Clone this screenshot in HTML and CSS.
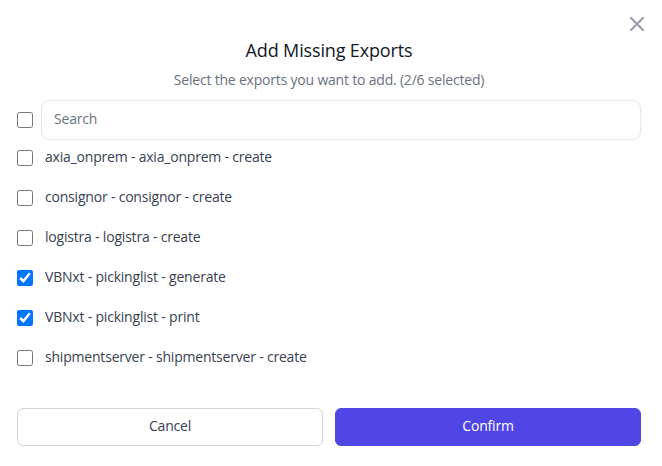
FILE: index.html
```html
<!DOCTYPE html>
<html>
<head>
<meta charset="utf-8">
<link rel="stylesheet" href="styles.css">
</head>
<body>
<div class="dialog">
  <button class="close" aria-label="Close">
    <svg width="16" height="16" viewBox="0 0 16 16"><path d="M2 2L14 14M14 2L2 14" stroke="#9ca3af" stroke-width="2.4" stroke-linecap="round"/></svg>
  </button>
  <h2 class="title">Add Missing Exports</h2>
  <p class="subtitle">Select the exports you want to add. (2/6 selected)</p>
  <div class="search-row">
    <input type="checkbox" class="cb">
    <input type="text" class="search" placeholder="Search">
  </div>
  <ul class="list">
    <li class="item"><input type="checkbox" class="cb"><span>axia_onprem - axia_onprem - create</span></li>
    <li class="item"><input type="checkbox" class="cb"><span>consignor - consignor - create</span></li>
    <li class="item"><input type="checkbox" class="cb"><span>logistra - logistra - create</span></li>
    <li class="item"><input type="checkbox" class="cb" checked><span>VBNxt - pickinglist - generate</span></li>
    <li class="item"><input type="checkbox" class="cb" checked><span>VBNxt - pickinglist - print</span></li>
    <li class="item"><input type="checkbox" class="cb"><span>shipmentserver - shipmentserver - create</span></li>
  </ul>
  <div class="actions">
    <button class="btn btn-cancel">Cancel</button>
    <button class="btn btn-confirm">Confirm</button>
  </div>
</div>
</body>
</html>
```
FILE: styles.css
```css
* { box-sizing: border-box; }
html, body { margin: 0; padding: 0; background: #fff; }
body { font-family: "Open Sans", "Noto Sans", sans-serif; color: #374151; letter-spacing: -0.2px; }
.dialog { position: relative; width: 662px; height: 466px; padding: 0 21px 0 17px; }
.close { position: absolute; top: 15px; left: 628px; width: 18px; height: 18px; padding: 1px; border: 0; background: none; }
.close svg { display: block; }
.title { margin: 0; padding-top: 38px; text-align: center; font-size: 18px; line-height: 24px; font-weight: 500; color: #111827; letter-spacing: -0.15px; }
.subtitle { margin: 8px 0 0; text-align: center; font-size: 14px; line-height: 20px; color: #6b7280; }
.search-row { display: flex; align-items: center; gap: 8px; margin-top: 10px; }
.cb { width: 16px; height: 16px; margin: 0; flex: none; }
.search { flex: 1; height: 40px; border: 1px solid #e5e7eb; border-radius: 8px; padding: 0 12px 3px; font-family: inherit; font-size: 14px; letter-spacing: -0.2px; color: #374151; outline: none; }
.search::placeholder { color: #6b7280; }
.list { list-style: none; margin: 0; padding: 0; }
.item { display: flex; align-items: center; gap: 12px; height: 40px; font-size: 14px; line-height: 20px; }
.item span { position: relative; top: -1px; }
.item:first-child { margin-top: -2px; }
.actions { display: flex; gap: 12px; margin-top: 30px; }
.btn { flex: 1; height: 38px; border-radius: 6px; font-family: inherit; font-size: 14px; font-weight: 500; letter-spacing: -0.2px; padding: 0 0 3px; }
.btn-cancel { background: #fff; border: 1px solid #d1d5db; color: #374151; }
.btn-confirm { background: #4f46e5; border: 1px solid #4f46e5; color: #fff; }
```
